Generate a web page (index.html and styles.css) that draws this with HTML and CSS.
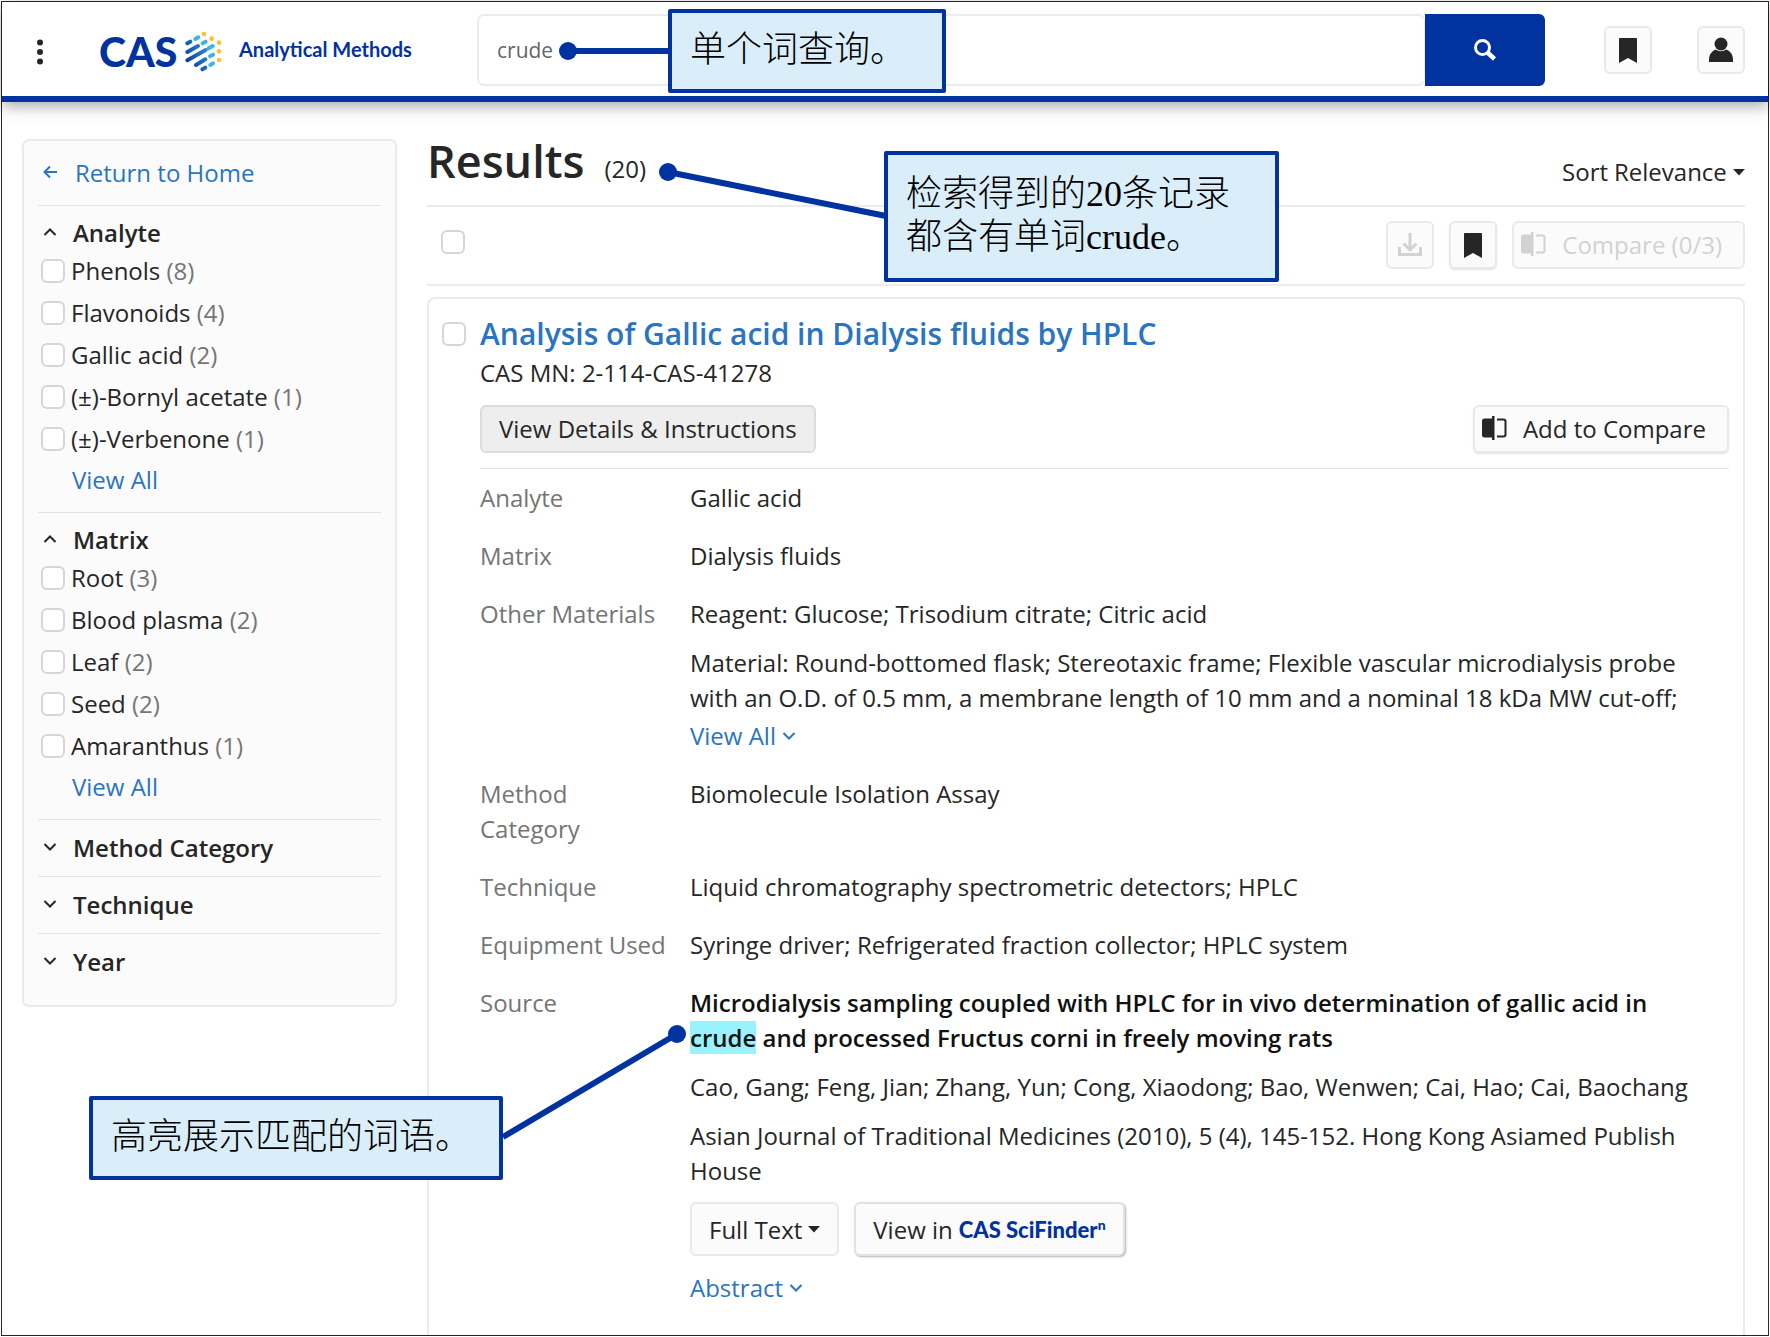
FILE: index.html
```html
<!DOCTYPE html>
<html lang="en">
<head>
<meta charset="utf-8">
<title>CAS Analytical Methods - Results</title>
<link rel="stylesheet" href="styles.css">
</head>
<body>
<svg class="sprite" aria-hidden="true">
  <symbol id="chevron" viewBox="0 0 14 10"><path d="M1.500 2 7 7.500 12.500 2" fill="none" stroke="currentColor" stroke-width="2"/></symbol>
  <symbol id="caret" viewBox="0 0 12 8"><path d="M0 1h12L6 7.500z" fill="currentColor"/></symbol>
  <symbol id="bookmark" viewBox="0 0 18 25"><path d="M1 0h16q1 0 1 1v24l-9-5-9 5V1q0-1 1-1z" fill="currentColor"/></symbol>
  <symbol id="compare" viewBox="0 0 25 24"><path d="M2.500 2.500H10V0h2.500v24H10v-2.500H2.500Q0 21.500 0 19V5q0-2.500 2.500-2.500z" fill="currentColor"/><path d="M15 3.500h6.500q2 0 2 2v13q0 2-2 2H15" fill="none" stroke="currentColor" stroke-width="2"/></symbol>
</svg>
<div class="page">
  <header class="header">
    <div class="brand">
      <button class="menu" type="button" aria-label="Menu">
        <svg width="6" height="26" viewBox="0 0 6 26" fill="currentColor"><circle cx="3" cy="3.500" r="3"/><circle cx="3" cy="13" r="3"/><circle cx="3" cy="22.500" r="3"/></svg>
      </button>
      <a class="logo" href="#">
        <span class="logo-name">CAS</span>
        <svg width="50" height="50" viewBox="0 0 150 150" aria-hidden="true">
          <defs><linearGradient id="blue" gradientUnits="userSpaceOnUse" x1="16" y1="100" x2="84" y2="62"><stop offset="0" stop-color="#0a3ea8"/><stop offset="1" stop-color="#2f8fd8"/></linearGradient></defs>
          <g fill="#fdc02f"><circle cx="72" cy="24" r="7"/><circle cx="95" cy="38" r="7"/><circle cx="117" cy="50" r="7"/><circle cx="117" cy="76" r="7"/><circle cx="117" cy="102" r="7"/></g>
          <path d="M46 39l9-5M68 52l9-5M86 67l12-7M90 91l9-5M91 117l8-5" stroke="#3cb4e5" stroke-width="12" stroke-linecap="round"/>
          <path d="M22 52l9-5M22 78l32-18M22 103l55-31M48 117l28-17M67 130l9-5" stroke="url(#blue)" stroke-width="12" stroke-linecap="round"/>
        </svg>
        <span class="logo-product">Analytical Methods</span>
      </a>
    </div>
    <form class="search">
      <input class="search-input" type="text" value="crude" aria-label="Search">
      <button class="search-button" type="button" aria-label="Search">
        <svg width="24" height="24" viewBox="0 0 24 24" fill="none" stroke="currentColor"><circle cx="9.500" cy="9.500" r="7" stroke-width="3"/><path d="M15 15l6.500 6" stroke-width="4.500"/></svg>
      </button>
    </form>
    <div class="header-tools">
      <button class="button icon-button" type="button" aria-label="Bookmarks"><svg width="18" height="25"><use href="#bookmark"/></svg></button>
      <button class="button icon-button" type="button" aria-label="Account"><svg width="24" height="26" viewBox="0 0 24 26" fill="currentColor"><circle cx="12" cy="7" r="6.500"/><path d="M6.500 12.500q5.500 3.500 11 0Q24 15.500 24 23v2H0v-2q0-7.500 6.500-10.500z"/></svg></button>
    </div>
  </header>

  <div class="body">
    <aside class="sidebar">
      <a class="return" href="#"><svg width="14" height="14" viewBox="0 0 14 14" fill="none" stroke="currentColor" stroke-width="2"><path d="M14 7H1.500M7 1.500 1.500 7 7 12.500"/></svg>Return to Home</a>
      <section class="facet">
        <h2><button class="facet-toggle open" type="button"><svg width="14" height="10"><use href="#chevron"/></svg>Analyte</button></h2>
        <label class="option"><input class="check" type="checkbox"><span>Phenols <span class="count">(8)</span></span></label>
        <label class="option"><input class="check" type="checkbox"><span>Flavonoids <span class="count">(4)</span></span></label>
        <label class="option"><input class="check" type="checkbox"><span>Gallic acid <span class="count">(2)</span></span></label>
        <label class="option"><input class="check" type="checkbox"><span>(±)-Bornyl acetate <span class="count">(1)</span></span></label>
        <label class="option"><input class="check" type="checkbox"><span>(±)-Verbenone <span class="count">(1)</span></span></label>
        <a class="facet-all" href="#">View All</a>
      </section>
      <section class="facet">
        <h2><button class="facet-toggle open" type="button"><svg width="14" height="10"><use href="#chevron"/></svg>Matrix</button></h2>
        <label class="option"><input class="check" type="checkbox"><span>Root <span class="count">(3)</span></span></label>
        <label class="option"><input class="check" type="checkbox"><span>Blood plasma <span class="count">(2)</span></span></label>
        <label class="option"><input class="check" type="checkbox"><span>Leaf <span class="count">(2)</span></span></label>
        <label class="option"><input class="check" type="checkbox"><span>Seed <span class="count">(2)</span></span></label>
        <label class="option"><input class="check" type="checkbox"><span>Amaranthus <span class="count">(1)</span></span></label>
        <a class="facet-all" href="#">View All</a>
      </section>
      <section class="facet closed"><h2><button class="facet-toggle" type="button"><svg width="14" height="10"><use href="#chevron"/></svg>Method Category</button></h2></section>
      <section class="facet closed"><h2><button class="facet-toggle" type="button"><svg width="14" height="10"><use href="#chevron"/></svg>Technique</button></h2></section>
      <section class="facet closed"><h2><button class="facet-toggle" type="button"><svg width="14" height="10"><use href="#chevron"/></svg>Year</button></h2></section>
    </aside>

    <main class="results">
      <div class="results-head">
        <h1>Results</h1>
        <span class="total">(20)</span>
        <div class="sort">
          <label for="sort">Sort</label>
          <select id="sort"><option>Relevance</option></select>
          <svg width="12" height="8"><use href="#caret"/></svg>
        </div>
      </div>
      <div class="toolbar">
        <input class="check" type="checkbox" aria-label="Select all">
        <div class="toolbar-actions">
          <button class="button icon-button" type="button" disabled aria-label="Download"><svg width="24" height="24" viewBox="0 0 24 24" fill="none" stroke="currentColor" stroke-width="3"><path d="M12 0v16M5.500 10.500l6.500 6.500 6.500-6.500M1.500 14v7.500h21V14"/></svg></button>
          <button class="button icon-button raised" type="button" aria-label="Save"><svg width="18" height="25"><use href="#bookmark"/></svg></button>
          <button class="button compare" type="button" disabled><svg width="25" height="24"><use href="#compare"/></svg>Compare (0/3)</button>
        </div>
      </div>

      <article class="card">
        <input class="check" type="checkbox" aria-label="Select Analysis of Gallic acid in Dialysis fluids by HPLC">
        <div class="card-body">
          <h2 class="card-title"><a href="#">Analysis of Gallic acid in Dialysis fluids by HPLC</a></h2>
          <p class="card-number">CAS MN: 2-114-CAS-41278</p>
          <div class="card-actions">
            <button class="button details" type="button">View Details &amp; Instructions</button>
            <button class="button compare raised" type="button"><svg width="25" height="24"><use href="#compare"/></svg>Add to Compare</button>
          </div>
          <dl class="fields">
            <dt>Analyte</dt><dd>Gallic acid</dd>
            <dt>Matrix</dt><dd>Dialysis fluids</dd>
            <dt>Other Materials</dt>
            <dd>
              <p>Reagent: Glucose; Trisodium citrate; Citric acid</p>
              <p>Material: Round-bottomed flask; Stereotaxic frame; Flexible vascular microdialysis probe with an O.D. of 0.5 mm, a membrane length of 10 mm and a nominal 18 kDa MW cut-off;</p>
              <a class="more" href="#">View All<svg width="14" height="10"><use href="#chevron"/></svg></a>
            </dd>
            <dt>Method Category</dt><dd>Biomolecule Isolation Assay</dd>
            <dt>Technique</dt><dd>Liquid chromatography spectrometric detectors; HPLC</dd>
            <dt>Equipment Used</dt><dd>Syringe driver; Refrigerated fraction collector; HPLC system</dd>
            <dt>Source</dt>
            <dd>
              <p class="source-title">Microdialysis sampling coupled with HPLC for in vivo determination of gallic acid in <mark>crude</mark> and processed Fructus corni in freely moving rats</p>
              <p>Cao, Gang; Feng, Jian; Zhang, Yun; Cong, Xiaodong; Bao, Wenwen; Cai, Hao; Cai, Baochang</p>
              <p>Asian Journal of Traditional Medicines (2010), 5 (4), 145-152. Hong Kong Asiamed Publish House</p>
              <div class="source-actions">
                <button class="button large" type="button">Full Text<svg width="12" height="8"><use href="#caret"/></svg></button>
                <button class="button large lifted" type="button">View in <b>CAS SciFinder<sup>n</sup></b></button>
              </div>
              <a class="more" href="#">Abstract<svg width="14" height="10"><use href="#chevron"/></svg></a>
            </dd>
          </dl>
        </div>
      </article>
    </main>
  </div>

  <svg class="pointer pointer-query" width="120" height="20" aria-hidden="true"><path d="M10 10H120"/><circle cx="10" cy="10" r="9"/></svg>
  <div class="note note-query" lang="zh-CN">单个词查询。</div>
  <svg class="pointer pointer-total" width="230" height="60" aria-hidden="true"><path d="M10 10 228 54"/><circle cx="10" cy="10" r="9"/></svg>
  <div class="note note-total" lang="zh-CN">检索得到的<span class="latin">20</span>条记录都含有单词<span class="latin">crude</span>。</div>
  <svg class="pointer pointer-match" width="190" height="120" aria-hidden="true"><path d="M178 10 4 113"/><circle cx="178" cy="10" r="9"/></svg>
  <div class="note note-match" lang="zh-CN">高亮展示匹配的词语。</div>
</div>
</body>
</html>
```
FILE: styles.css
```css
* { box-sizing: border-box; }

body {
  margin: 0;
  padding: 1px;
  background: #fff;
  color: #262626;
  font-family: "Open Sans", "Noto Sans", sans-serif;
  font-size: 24px;
  line-height: 35px;
}

h1, h2, p, dl, dd { margin: 0; }
a { color: #2b74bf; text-decoration: none; }
button, input, select { font: inherit; color: inherit; margin: 0; }
svg { flex: none; }
.sprite { position: absolute; width: 0; height: 0; }

.page {
  position: relative;
  display: flex;
  flex-direction: column;
  min-height: calc(100vh - 2px);
  border: 1px solid #262626;
}

/* Header */
.header {
  display: flex;
  align-items: center;
  height: 100px;
  padding: 2px 23px 0 0;
  border-bottom: 6px solid #0032a0;
  box-shadow: 0 4px 14px rgba(0, 0, 0, .35);
}
.brand { display: flex; align-items: center; width: 475px; padding: 2px 0 0 24px; }
.menu {
  display: flex;
  justify-content: center;
  width: 28px;
  padding: 4px 0 2px;
  border: 0;
  background: none;
}
.logo {
  display: flex;
  align-items: center;
  margin-left: 45px;
  color: #0032a0;
  font-family: Lato, sans-serif;
}
.logo-name { width: 81px; font-size: 41px; font-weight: 900; }
.logo-product { margin-left: 9px; padding-bottom: 4px; font-size: 20px; font-weight: 700; }

.search { display: flex; flex: 1; height: 72px; }
.search-input {
  flex: 1;
  min-width: 0;
  padding: 0 18px;
  border: 2px solid #ececec;
  border-right-width: 1px;
  border-radius: 7px;
  background: #fff;
  color: #666;
  font-size: 21px;
}
.search-button {
  display: flex;
  align-items: center;
  justify-content: center;
  width: 120px;
  border: 0;
  border-radius: 0 6px 6px 0;
  background: #0032a0;
  color: #fff;
}
.header-tools { display: flex; gap: 45px; margin-left: 59px; }

/* Controls */
.button {
  display: flex;
  align-items: center;
  height: 48px;
  padding: 0 17px 2px;
  border: 2px solid #e9e9e9;
  border-radius: 6px;
  background: #fbfbfb;
  white-space: nowrap;
}
.button:disabled { color: #d2d2d2; }
.icon-button { justify-content: center; width: 48px; padding: 0; }
.raised { box-shadow: 0 1px 2px rgba(0, 0, 0, .12); }
.lifted { border-color: #e2e2e2; box-shadow: 1px 1px 2px rgba(0, 0, 0, .3); }
.large { height: 54px; padding-bottom: 0; }
.compare { gap: 16px; padding: 0 21px 2px 7px; }
.details { border-color: #dcdcdc; background: #eee; }

.check {
  flex: none;
  width: 24px;
  height: 24px;
  border: 2px solid #d6d6d6;
  border-radius: 6px;
  background: #fff;
  appearance: none;
}

/* Layout */
.body {
  display: flex;
  flex: 1;
  align-items: flex-start;
  gap: 30px;
  padding: 37px 23px 0 20px;
}

/* Sidebar */
.sidebar {
  flex: none;
  width: 375px;
  padding: 14px 14px 15px;
  border: 2px solid #ebebeb;
  border-radius: 7px;
  background: #fbfbfb;
}
.return {
  display: flex;
  align-items: center;
  gap: 18px;
  height: 50px;
  padding: 0 0 16px 5px;
}
.facet { padding: 9px 0 11px; border-top: 1px solid #e2e2e2; }
.closed { padding: 10px 0 12px; }
.facet h2 { font: inherit; }
.facet-toggle {
  display: flex;
  align-items: center;
  gap: 16px;
  height: 34px;
  padding: 0 0 0 5px;
  border: 0;
  background: none;
  font-weight: 600;
}
.open svg { transform: rotate(180deg); }
.option { display: flex; align-items: center; gap: 6px; height: 42px; padding-left: 3px; }
.option .check { margin-top: 2px; }
.count { color: #757575; }
.facet-all { display: block; padding-left: 34px; line-height: 42px; }

/* Results */
.results { display: flex; flex: 1; flex-direction: column; align-self: stretch; min-width: 0; }
.results-head {
  display: flex;
  align-items: baseline;
  height: 68px;
  border-bottom: 2px solid #ececec;
}
.results-head h1 { font-size: 45px; font-weight: 600; line-height: 44px; }
.total { margin-left: 20px; }
.sort {
  display: flex;
  align-items: center;
  align-self: flex-start;
  gap: 6px;
  margin: 15px 0 0 auto;
}
.sort select {
  padding: 0;
  border: 0;
  background: none;
  appearance: none;
}
.toolbar {
  display: flex;
  align-items: center;
  height: 79px;
  padding: 0 0 1px 14px;
  border-bottom: 2px solid #ececec;
}
.toolbar > .check { margin-bottom: 6px; }
.toolbar-actions { display: flex; gap: 15px; margin-left: auto; }

.card {
  display: flex;
  flex: 1;
  align-items: flex-start;
  gap: 14px;
  margin-top: 11px;
  padding: 16px 14px 0 13px;
  border: 2px solid #ebebeb;
  border-bottom: 0;
  border-radius: 8px 8px 0 0;
}
.card > .check { margin-top: 7px; }
.card-body { flex: 1; min-width: 0; }
.card-title { font-size: 30px; font-weight: 600; line-height: 38px; }
.card-number { margin-top: 2px; }
.card-actions {
  display: flex;
  justify-content: space-between;
  padding: 15px 0;
  border-bottom: 1px solid #e2e2e2;
}

.fields {
  display: grid;
  grid-template-columns: 187px 1fr;
  gap: 23px;
  padding: 11px 24px 20px 0;
}
.fields dt { color: #757575; }
.fields p + p { margin-top: 14px; }
.more { display: flex; align-items: center; gap: 6px; margin-top: 3px; }
.source-title { color: #111; font-weight: 600; }
.source-title mark { background: #96f3ff; color: inherit; }
.source-actions { display: flex; gap: 15px; margin: 14px 0; }
.source-actions svg { margin-left: 6px; }
.source-actions b {
  margin-left: 6px;
  color: #0032a0;
  font-family: Lato, sans-serif;
  font-size: 22px;
  font-weight: 900;
}
.source-actions sup { font-size: 14px; line-height: 0; }

/* Annotations laid over the page */
.note {
  position: absolute;
  padding: 16px 18px 17px;
  border: 4px solid #0032a0;
  border-radius: 2px;
  background: #d9eef9;
  color: #000;
  font-family: "Liberation Serif", "Noto Sans CJK SC", serif;
  font-size: 36px;
  font-weight: 300;
  line-height: 43px;
}
.latin { font-weight: 400; }
.pointer { position: absolute; fill: #0032a0; stroke: #0032a0; }
.pointer path { stroke-width: 6px; }
.pointer circle { stroke: none; }
.note-query { top: 7px; left: 666px; width: 278px; }
.note-total { top: 149px; left: 882px; width: 395px; padding-block: 18px 19px; }
.note-match { top: 1094px; left: 87px; width: 414px; }
.pointer-query { top: 39px; left: 556px; }
.pointer-total { top: 160px; left: 656px; }
.pointer-match { top: 1022px; left: 497px; }
```
